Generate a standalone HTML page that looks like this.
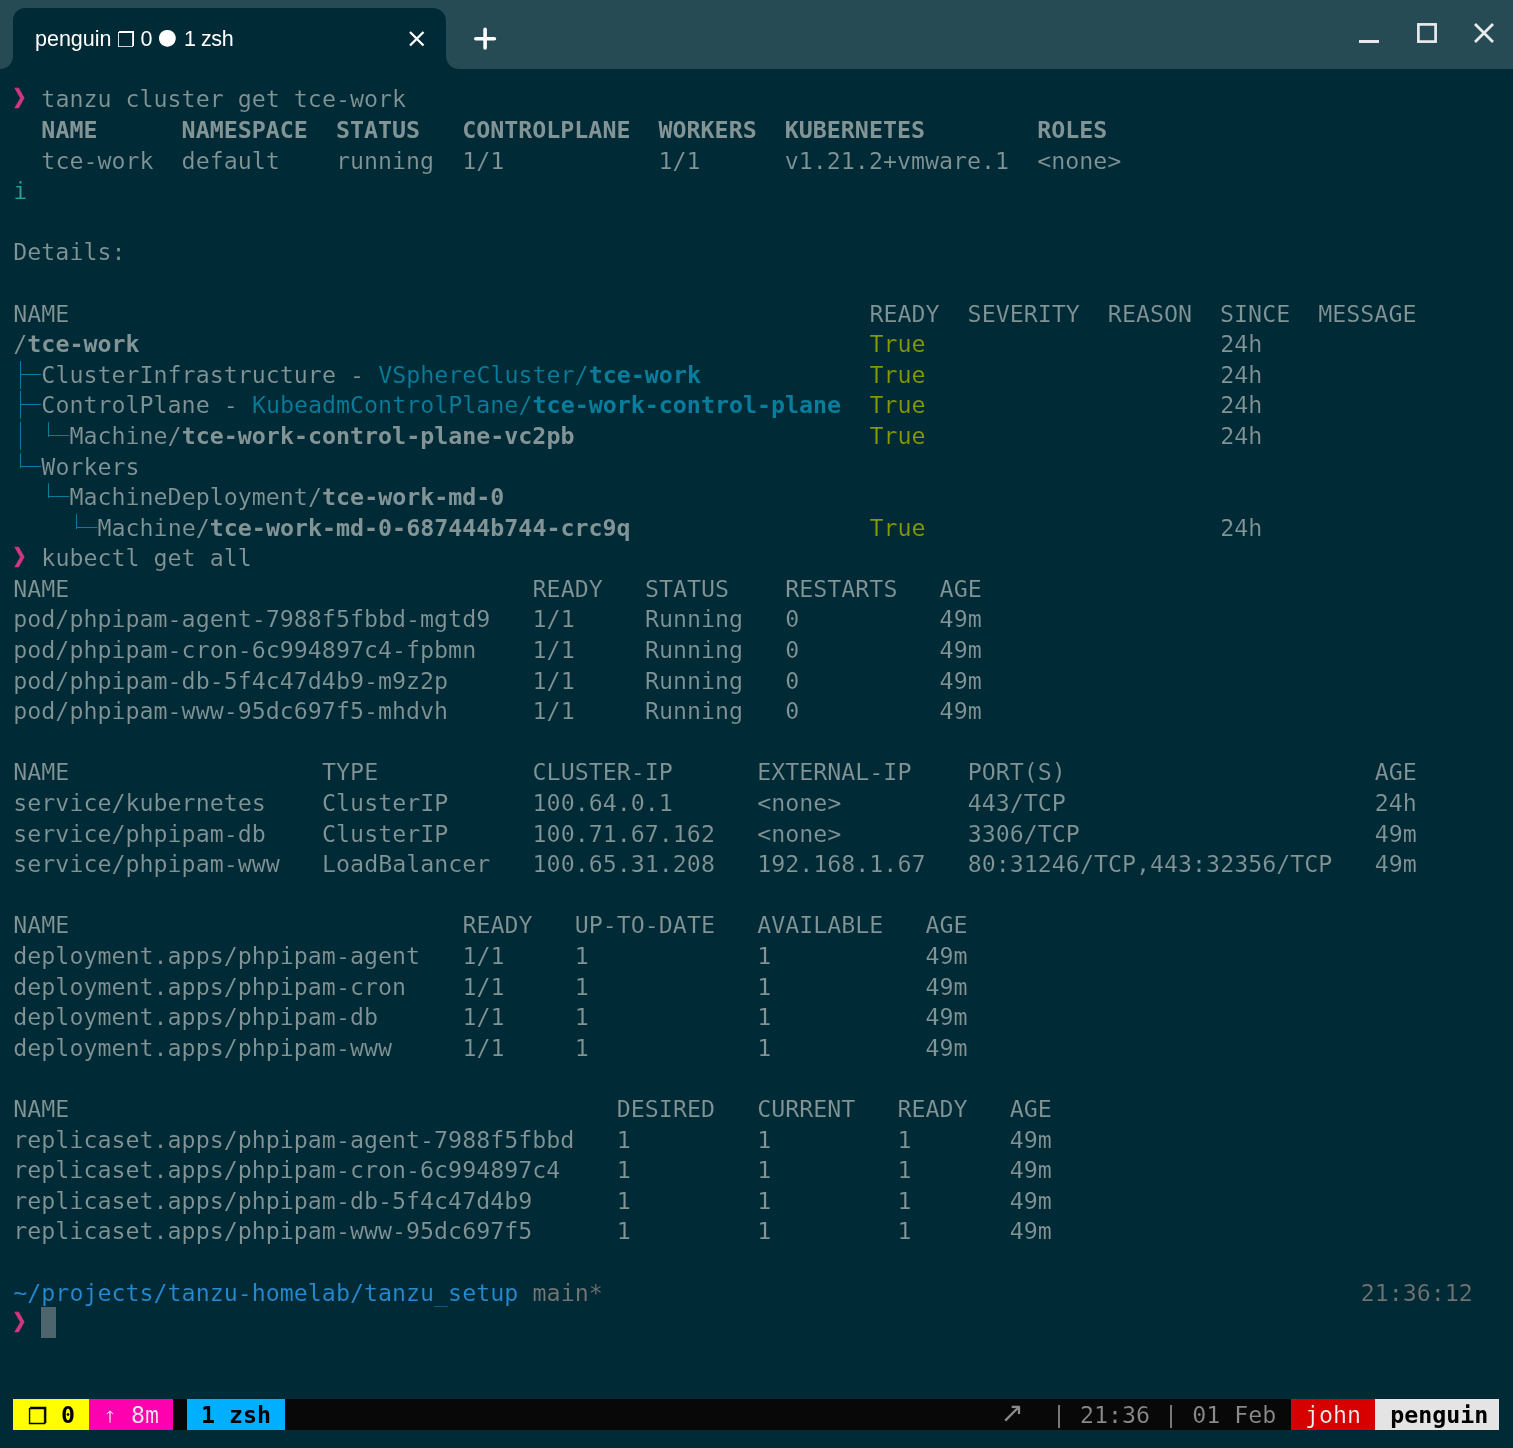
<!DOCTYPE html>
<html lang="en">
<head>
<meta charset="utf-8">
<title>penguin 0 1 zsh</title>
<style>
html,body{margin:0;padding:0;}
body{width:1513px;height:1448px;overflow:hidden;background:#002b36;position:relative;
  font-family:"DejaVu Sans Mono","Liberation Mono",monospace;}
#screen{position:absolute;left:0;top:0;width:1513px;height:1448px;overflow:hidden;background:#002b36;will-change:transform;}
#titlebar{position:absolute;left:0;top:0;width:1513px;height:69px;background:#274b55;}
#tabshape{position:absolute;left:0;top:0;}
.tt{position:absolute;top:26px;height:26px;line-height:26px;font-family:"Liberation Sans",sans-serif;font-size:21.5px;color:#fff;white-space:pre;}
#term{position:absolute;left:0;top:69px;width:1513px;height:1379px;background:#002b36;}
.row{position:absolute;left:0;height:30.6px;line-height:30.6px;width:1513px;white-space:pre;
  font-size:23.31px;color:#839496;-webkit-text-stroke:0.16px #002b36;}
.row span{position:absolute;top:0;letter-spacing:0;}
.b{font-weight:bold;-webkit-text-stroke:0;}
.sym{display:inline-block;transform-origin:2px 23px;transform:translate(-0.6px,-0.7px) scale(1.03,1.169);-webkit-text-stroke:0.5px #d33682;}
.mg{color:#d33682;}
.cy{color:#2aa198;}
.gr{color:#859900;}
.bl{color:#268bd2;}
.dbl{color:#087d9c;}
.bbl{color:#087d9c;}
.box{color:#087d9c;-webkit-text-stroke:0;}
.gy{color:#767676;}
.gy2{color:#727272;}
#cursor{position:absolute;left:41px;width:15px;height:31px;background:#4d666d;}
#status{position:absolute;left:13px;top:1399px;width:1486px;height:31px;background:#080808;overflow:hidden;
  font-size:23.31px;line-height:31px;white-space:pre;}
#status span{position:absolute;top:0;height:31px;}
#status .st{top:0.5px;height:30.6px;line-height:30.6px;}
#status .ico{font-family:"DejaVu Sans",sans-serif;font-size:21.8px;width:20px;text-align:center;-webkit-text-stroke:0.5px #000;}
#status .arr{font-family:"DejaVu Sans",sans-serif;font-size:28px;}
</style>
</head>
<body>
<div id="screen">
<div id="titlebar">
<svg id="tabshape" width="1513" height="69" viewBox="0 0 1513 69">
  <path d="M0 69 A13 13 0 0 0 13 56 L13 20 A12 12 0 0 1 25 8 L433 8 A13 13 0 0 1 446 21 L446 56 A13 13 0 0 0 459 69 Z" fill="#002b36"/>
  <!-- tab close -->
  <path d="M410 32 L423.5 45.5 M423.5 32 L410 45.5" stroke="#fff" stroke-width="2.3" fill="none"/>
  <!-- new tab plus -->
  <path d="M475.8 38.7 L494.4 38.7 M485.1 29.4 L485.1 48" stroke="#fff" stroke-width="3.6" stroke-linecap="round" fill="none"/>
  <!-- window controls -->
  <rect x="1359" y="40" width="20" height="3" fill="#e8eaed"/>
  <rect x="1418.4" y="24.4" width="17.2" height="17.2" fill="none" stroke="#e8eaed" stroke-width="2.7"/>
  <path d="M1475 24 L1493 42 M1493 24 L1475 42" stroke="#e8eaed" stroke-width="2.8" fill="none"/>
</svg>
<span class="tt" style="left:35px">penguin</span>
<span class="tt" style="left:117px;top:26.6px;font-family:'DejaVu Sans',sans-serif;font-size:20.5px">❐</span>
<span class="tt" style="left:140.4px">0</span>
<span class="tt" style="left:157.8px;top:24.4px;font-family:'DejaVu Sans',sans-serif;font-size:22px">●</span>
<span class="tt" style="left:184px;letter-spacing:-0.45px">1 zsh</span>
</div>
<div id="term">
</div>
<div class="row" style="top:84.00px"><span class="mg sym" style="left:13.30px">❯</span><span style="left:41.37px">tanzu cluster get tce-work</span></div>
<div class="row" style="top:115.00px"><span class="b" style="left:41.37px">NAME      NAMESPACE  STATUS   CONTROLPLANE  WORKERS  KUBERNETES        ROLES</span></div>
<div class="row" style="top:146.00px"><span style="left:41.37px">tce-work  default    running  1/1           1/1      v1.21.2+vmware.1  &lt;none&gt;</span></div>
<div class="row" style="top:176.00px"><span class="cy" style="left:13.30px">i</span></div>
<div class="row" style="top:237.00px"><span style="left:13.30px">Details:</span></div>
<div class="row" style="top:299.00px"><span style="left:13.30px">NAME</span><span style="left:869.43px">READY  SEVERITY  REASON  SINCE  MESSAGE</span></div>
<div class="row" style="top:329.00px"><span style="left:13.30px">/</span><span class="b" style="left:27.34px">tce-work</span><span class="gr" style="left:869.43px">True</span><span style="left:1220.31px">24h</span></div>
<div class="row" style="top:360.00px"><span class="box" style="left:13.30px;clip-path:polygon(6.70px 0,7.70px 0,7.70px 14px,28.07px 14px,28.07px 15px,7.70px 15px,7.70px 100%,6.70px 100%)">├─</span><span style="left:41.37px">ClusterInfrastructure - </span><span class="dbl" style="left:378.21px">VSphereCluster/</span><span class="b bbl" style="left:588.74px">tce-work</span><span class="gr" style="left:869.43px">True</span><span style="left:1220.31px">24h</span></div>
<div class="row" style="top:390.00px"><span class="box" style="left:13.30px;clip-path:polygon(6.70px 0,7.70px 0,7.70px 14px,28.07px 14px,28.07px 15px,7.70px 15px,7.70px 100%,6.70px 100%)">├─</span><span style="left:41.37px">ControlPlane - </span><span class="dbl" style="left:251.90px">KubeadmControlPlane/</span><span class="b bbl" style="left:532.59px">tce-work-control-plane</span><span class="gr" style="left:869.43px">True</span><span style="left:1220.31px">24h</span></div>
<div class="row" style="top:421.00px"><span class="box" style="left:13.30px;clip-path:polygon(6.70px 0,7.70px 0,7.70px 100%,6.70px 100%)">│</span><span class="box" style="left:41.37px;clip-path:polygon(6.63px 0,7.63px 0,7.63px 14px,28.07px 14px,28.07px 15px,7.63px 15px,7.63px 100%,6.63px 100%)">└─</span><span style="left:69.44px">Machine/</span><span class="b" style="left:181.72px">tce-work-control-plane-vc2pb</span><span class="gr" style="left:869.43px">True</span><span style="left:1220.31px">24h</span></div>
<div class="row" style="top:452.00px"><span class="box" style="left:13.30px;clip-path:polygon(6.70px 0,7.70px 0,7.70px 14px,28.07px 14px,28.07px 15px,7.70px 15px,7.70px 100%,6.70px 100%)">└─</span><span style="left:41.37px">Workers</span></div>
<div class="row" style="top:482.00px"><span class="box" style="left:41.37px;clip-path:polygon(6.63px 0,7.63px 0,7.63px 14px,28.07px 14px,28.07px 15px,7.63px 15px,7.63px 100%,6.63px 100%)">└─</span><span style="left:69.44px">MachineDeployment/</span><span class="b" style="left:322.07px">tce-work-md-0</span></div>
<div class="row" style="top:513.00px"><span class="box" style="left:69.44px;clip-path:polygon(6.56px 0,7.56px 0,7.56px 14px,28.07px 14px,28.07px 15px,7.56px 15px,7.56px 100%,6.56px 100%)">└─</span><span style="left:97.51px">Machine/</span><span class="b" style="left:209.79px">tce-work-md-0-687444b744-crc9q</span><span class="gr" style="left:869.43px">True</span><span style="left:1220.31px">24h</span></div>
<div class="row" style="top:543.00px"><span class="mg sym" style="left:13.30px">❯</span><span style="left:41.37px">kubectl get all</span></div>
<div class="row" style="top:574.00px"><span style="left:13.30px">NAME</span><span style="left:532.59px">READY</span><span style="left:644.88px">STATUS</span><span style="left:785.22px">RESTARTS</span><span style="left:939.61px">AGE</span></div>
<div class="row" style="top:604.00px"><span style="left:13.30px">pod/phpipam-agent-7988f5fbbd-mgtd9</span><span style="left:532.59px">1/1</span><span style="left:644.88px">Running</span><span style="left:785.22px">0</span><span style="left:939.61px">49m</span></div>
<div class="row" style="top:635.00px"><span style="left:13.30px">pod/phpipam-cron-6c994897c4-fpbmn</span><span style="left:532.59px">1/1</span><span style="left:644.88px">Running</span><span style="left:785.22px">0</span><span style="left:939.61px">49m</span></div>
<div class="row" style="top:666.00px"><span style="left:13.30px">pod/phpipam-db-5f4c47d4b9-m9z2p</span><span style="left:532.59px">1/1</span><span style="left:644.88px">Running</span><span style="left:785.22px">0</span><span style="left:939.61px">49m</span></div>
<div class="row" style="top:696.00px"><span style="left:13.30px">pod/phpipam-www-95dc697f5-mhdvh</span><span style="left:532.59px">1/1</span><span style="left:644.88px">Running</span><span style="left:785.22px">0</span><span style="left:939.61px">49m</span></div>
<div class="row" style="top:757.00px"><span style="left:13.30px">NAME</span><span style="left:322.07px">TYPE</span><span style="left:532.59px">CLUSTER-IP</span><span style="left:757.15px">EXTERNAL-IP</span><span style="left:967.68px">PORT(S)</span><span style="left:1374.69px">AGE</span></div>
<div class="row" style="top:788.00px"><span style="left:13.30px">service/kubernetes</span><span style="left:322.07px">ClusterIP</span><span style="left:532.59px">100.64.0.1</span><span style="left:757.15px">&lt;none&gt;</span><span style="left:967.68px">443/TCP</span><span style="left:1374.69px">24h</span></div>
<div class="row" style="top:819.00px"><span style="left:13.30px">service/phpipam-db</span><span style="left:322.07px">ClusterIP</span><span style="left:532.59px">100.71.67.162</span><span style="left:757.15px">&lt;none&gt;</span><span style="left:967.68px">3306/TCP</span><span style="left:1374.69px">49m</span></div>
<div class="row" style="top:849.00px"><span style="left:13.30px">service/phpipam-www</span><span style="left:322.07px">LoadBalancer</span><span style="left:532.59px">100.65.31.208</span><span style="left:757.15px">192.168.1.67</span><span style="left:967.68px">80:31246/TCP,443:32356/TCP</span><span style="left:1374.69px">49m</span></div>
<div class="row" style="top:910.00px"><span style="left:13.30px">NAME</span><span style="left:462.42px">READY</span><span style="left:574.70px">UP-TO-DATE</span><span style="left:757.15px">AVAILABLE</span><span style="left:925.57px">AGE</span></div>
<div class="row" style="top:941.00px"><span style="left:13.30px">deployment.apps/phpipam-agent</span><span style="left:462.42px">1/1</span><span style="left:574.70px">1</span><span style="left:757.15px">1</span><span style="left:925.57px">49m</span></div>
<div class="row" style="top:972.00px"><span style="left:13.30px">deployment.apps/phpipam-cron</span><span style="left:462.42px">1/1</span><span style="left:574.70px">1</span><span style="left:757.15px">1</span><span style="left:925.57px">49m</span></div>
<div class="row" style="top:1002.00px"><span style="left:13.30px">deployment.apps/phpipam-db</span><span style="left:462.42px">1/1</span><span style="left:574.70px">1</span><span style="left:757.15px">1</span><span style="left:925.57px">49m</span></div>
<div class="row" style="top:1033.00px"><span style="left:13.30px">deployment.apps/phpipam-www</span><span style="left:462.42px">1/1</span><span style="left:574.70px">1</span><span style="left:757.15px">1</span><span style="left:925.57px">49m</span></div>
<div class="row" style="top:1094.00px"><span style="left:13.30px">NAME</span><span style="left:616.80px">DESIRED</span><span style="left:757.15px">CURRENT</span><span style="left:897.50px">READY</span><span style="left:1009.78px">AGE</span></div>
<div class="row" style="top:1125.00px"><span style="left:13.30px">replicaset.apps/phpipam-agent-7988f5fbbd</span><span style="left:616.80px">1</span><span style="left:757.15px">1</span><span style="left:897.50px">1</span><span style="left:1009.78px">49m</span></div>
<div class="row" style="top:1155.00px"><span style="left:13.30px">replicaset.apps/phpipam-cron-6c994897c4</span><span style="left:616.80px">1</span><span style="left:757.15px">1</span><span style="left:897.50px">1</span><span style="left:1009.78px">49m</span></div>
<div class="row" style="top:1186.00px"><span style="left:13.30px">replicaset.apps/phpipam-db-5f4c47d4b9</span><span style="left:616.80px">1</span><span style="left:757.15px">1</span><span style="left:897.50px">1</span><span style="left:1009.78px">49m</span></div>
<div class="row" style="top:1216.00px"><span style="left:13.30px">replicaset.apps/phpipam-www-95dc697f5</span><span style="left:616.80px">1</span><span style="left:757.15px">1</span><span style="left:897.50px">1</span><span style="left:1009.78px">49m</span></div>
<div class="row" style="top:1278.00px"><span class="bl" style="left:13.30px">~/projects/tanzu-homelab/tanzu_setup</span><span class="gy" style="left:532.59px">main*</span><span class="gy2" style="left:1360.66px">21:36:12</span></div>
<div class="row" style="top:1308.00px"><span class="mg sym" style="left:13.30px">❯</span></div>
<div id="cursor" style="top:1307px"></div>
<div id="status">
<span class="sb" style="left:0;width:76px;background:#ffff00"></span>
<span class="sb" style="left:76px;width:84px;background:#ff00af"></span>
<span class="sb" style="left:174px;width:98px;background:#00afff"></span>
<span class="sb" style="left:1278px;width:84px;background:#d70000"></span>
<span class="sb" style="left:1362px;width:124px;background:#e4e4e4"></span>
<span class="st ico" style="left:14.9px;top:2.6px;color:#000">❐</span>
<span class="st" style="left:48px;color:#000;font-weight:bold">0</span>
<span class="st" style="left:90px;color:#eee;-webkit-text-stroke:0.55px #ff00af">↑</span>
<span class="st" style="left:118px;color:#eee;-webkit-text-stroke:0.16px #ff00af">8m</span>
<span class="st" style="left:188px;color:#000;font-weight:bold">1 zsh</span>
<span class="st arr" style="left:987.2px;top:-0.7px;color:#8a8a8a">↗</span>
<span class="st" style="left:1038.89px;color:#8a8a8a;-webkit-text-stroke:0.16px #080808">| 21:36 | 01 Feb</span>
<span class="st" style="left:1292.02px;color:#eee;-webkit-text-stroke:0.16px #d70000">john</span>
<span class="st" style="left:1377.23px;color:#000;font-weight:bold">penguin</span>
</div>
</div>
</body>
</html>
